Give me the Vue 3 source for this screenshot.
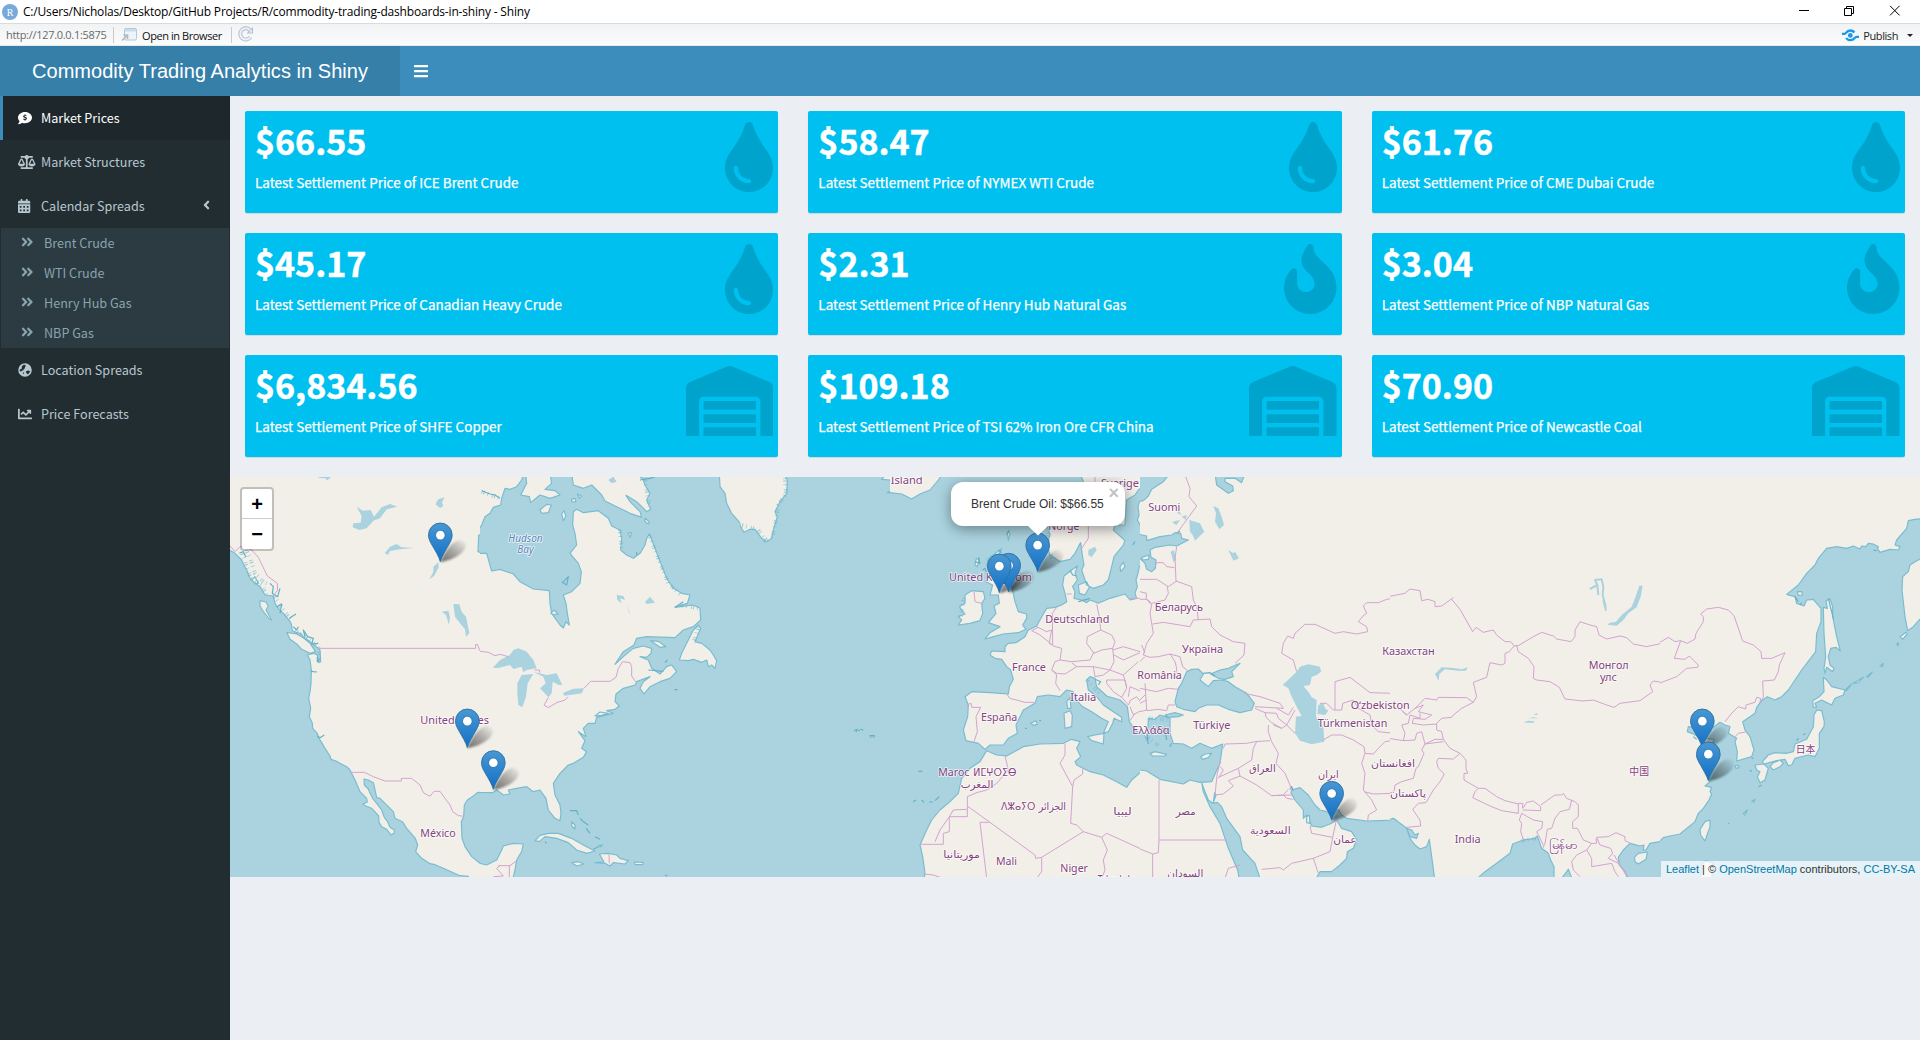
<script setup>
const icons = {
  tint: { w: 352, d: 'M205.22 22.09c-7.94-28.78-49.44-30.12-58.44 0C100.01 179.85 0 222.72 0 333.91 0 432.35 78.72 512 176 512s176-79.65 176-178.09c0-111.75-99.79-153.34-146.78-311.82zM176 448c-61.75 0-112-50.25-112-112 0-8.84 7.16-16 16-16s16 7.16 16 16c0 44.11 35.89 80 80 80 8.84 0 16 7.16 16 16s-7.16 16-16 16z' },
  fire: { w: 384, d: 'M216 23.86c0-23.8-30.65-32.77-44.15-13.04C48 191.85 224 200 224 288c0 35.63-29.11 64.46-64.85 63.99-35.17-.45-63.15-29.77-63.15-64.94v-85.51c0-21.7-26.47-32.23-41.43-16.5C27.8 213.16 0 261.33 0 320c0 105.87 86.13 192 192 192s192-86.13 192-192c0-170.29-168-193-168-296.14z' },
  warehouse: { w: 640, d: 'M504 352H136.4c-4.4 0-8 3.6-8 8l-.1 48c0 4.4 3.6 8 8 8H504c4.4 0 8-3.6 8-8v-48c0-4.4-3.6-8-8-8zm0 96H136.1c-4.4 0-8 3.6-8 8l-.1 48c0 4.4 3.6 8 8 8h368c4.4 0 8-3.6 8-8v-48c0-4.4-3.6-8-8-8zm0-192H136.6c-4.4 0-8 3.6-8 8l-.1 48c0 4.4 3.6 8 8 8H504c4.4 0 8-3.6 8-8v-48c0-4.4-3.6-8-8-8zm106.5-139L338.4 3.7a48.15 48.15 0 0 0-36.9 0L29.5 117C11.7 124.5 0 141.9 0 161.3V504c0 4.4 3.6 8 8 8h80c4.4 0 8-3.6 8-8V256c0-17.6 14.6-32 32.6-32h382.8c18 0 32.6 14.4 32.6 32v248c0 4.4 3.6 8 8 8h80c4.4 0 8-3.6 8-8V161.3c0-19.4-11.7-36.8-29.5-44.3z' },
  comment: { w: 512, d: 'M256 32C114.600 32 0 125.100 0 240c0 49.600 21.400 95 57 130.700C44.500 421.100 2.700 466 2.200 466.500c-2.200 2.300-2.800 5.700-1.500 8.700S4.800 480 8 480c66.300 0 116-31.800 140.600-51.400 32.700 12.300 69 19.400 107.400 19.400 141.400 0 256-93.100 256-208S397.400 32 256 32zM240 120h32v26c18 2 34 9 46 19l-22 28c-14-11-32-17-48-15-18 2-20 20-6 27l44 16c62 24 52 96-14 106v25h-32v-25c-22-2-40-10-54-22l22-30c18 15 42 22 60 17 18-5 18-22 2-29l-44-17c-58-24-48-90 14-101z' },
  scale: { w: 640, d: 'M256 336h-.02c0-16.180 1.340-8.730-85.050-181.510-17.650-35.290-68.190-35.360-85.870 0C-2.060 328.750.02 320.330.02 336H0c0 44.180 57.310 80 128 80s128-35.820 128-80zM128 176l72 144H56l72-144zm511.980 160c0-16.180 1.340-8.730-85.050-181.510-17.650-35.290-68.190-35.360-85.870 0-87.120 174.260-85.040 165.840-85.040 181.510H384c0 44.180 57.310 80 128 80s128-35.820 128-80h-.02zM440 320l72-144 72 144H440zm88 128H352V153.250c23.510-10.290 41.160-31.480 46.390-57.250H528c8.840 0 16-7.160 16-16V48c0-8.840-7.160-16-16-16H383.640C369.040 12.680 346.090 0 320 0s-49.040 12.680-63.640 32H112c-8.840 0-16 7.160-16 16v32c0 8.840 7.160 16 16 16h129.610c5.230 25.760 22.870 46.960 46.390 57.250V448H112c-8.840 0-16 7.160-16 16v32c0 8.840 7.160 16 16 16h416c8.840 0 16-7.160 16-16v-32c0-8.840-7.160-16-16-16z' },
  calendar: { w: 448, d: 'M0 464c0 26.500 21.500 48 48 48h352c26.500 0 48-21.500 48-48V192H0zM320 256h64v64h-64zM320 384h64v64h-64zM192 256h64v64h-64zM192 384h64v64h-64zM64 256h64v64H64zM64 384h64v64H64zM400 64h-48V16c0-8.800-7.200-16-16-16h-32c-8.800 0-16 7.200-16 16v48H160V16c0-8.800-7.200-16-16-16h-32c-8.800 0-16 7.200-16 16v48H48C21.500 64 0 85.500 0 112v48h448v-48c0-26.500-21.500-48-48-48z' },
  globe: { w: 512, d: 'M256 8a248 248 0 1 0 0 496a248 248 0 1 0 0-496zM150 108L210 62l60 14 14 44-34 26 8 46-46 26-12 48-62 20-24 26-44-10-16-50 40-28 36-10zM300 300l62-28 78 16-12 52-50 62-40 10-20-50-34-14zM180 340l44 14-6 40-28 6z' },
  chart: { w: 512, d: 'M496 384H64V80c0-8.840-7.160-16-16-16H16C7.160 64 0 71.160 0 80v336c0 17.670 14.330 32 32 32h464c8.840 0 16-7.160 16-16v-32c0-8.840-7.160-16-16-16zM464 96H345.940c-21.380 0-32.090 25.850-16.970 40.970l32.400 32.400L288 242.750l-73.370-73.370c-12.500-12.500-32.760-12.500-45.250 0l-68.690 68.690c-6.250 6.250-6.250 16.380 0 22.630l22.620 22.620c6.250 6.250 16.380 6.250 22.630 0L192 237.250l73.370 73.370c12.500 12.500 32.760 12.500 45.250 0l96-96 32.400 32.400c15.120 15.120 40.970 4.410 40.970-16.970V112c.01-8.840-7.150-16-15.990-16z' },
  angles: { w: 448, d: 'M224.300 273l-136 136c-9.400 9.400-24.600 9.400-33.900 0l-22.600-22.600c-9.400-9.400-9.400-24.600 0-33.900l96.400-96.400-96.400-96.400c-9.400-9.400-9.400-24.600 0-33.900L54.300 103c9.400-9.400 24.600-9.400 33.900 0l136 136c9.500 9.400 9.500 24.600.1 34zm192-34l-136-136c-9.400-9.400-24.600-9.400-33.900 0l-22.600 22.600c-9.400 9.400-9.400 24.600 0 33.900l96.400 96.400-96.400 96.400c-9.400 9.400-9.400 24.600 0 33.900l22.600 22.600c9.400 9.400 24.600 9.400 33.900 0l136-136c9.400-9.200 9.400-24.400 0-33.800z' },
}

const menu = [
  { label: 'Market Prices', icon: 'comment', active: true },
  { label: 'Market Structures', icon: 'scale' },
  { label: 'Calendar Spreads', icon: 'calendar', children: ['Brent Crude', 'WTI Crude', 'Henry Hub Gas', 'NBP Gas'] },
  { label: 'Location Spreads', icon: 'globe' },
  { label: 'Price Forecasts', icon: 'chart' },
]

const boxes = [
  { value: '$66.55', name: 'ICE Brent Crude', icon: 'tint' },
  { value: '$58.47', name: 'NYMEX WTI Crude', icon: 'tint' },
  { value: '$61.76', name: 'CME Dubai Crude', icon: 'tint' },
  { value: '$45.17', name: 'Canadian Heavy Crude', icon: 'tint' },
  { value: '$2.31', name: 'Henry Hub Natural Gas', icon: 'fire' },
  { value: '$3.04', name: 'NBP Natural Gas', icon: 'fire' },
  { value: '$6,834.56', name: 'SHFE Copper', icon: 'warehouse' },
  { value: '$109.18', name: 'TSI 62% Iron Ore CFR China', icon: 'warehouse' },
  { value: '$70.90', name: 'Newcastle Coal', icon: 'warehouse' },
]

// Map strips, west to east. Map units are a third of a pixel.
const tiles = [
  {
    at: 0, from: 0, w: 750, base: 'sea',
    land: 'M-10 0H765V192L746 195 744 245 765 252V966L742 968 730 978 712 990 703 1005 701 1040 694 1055 696 1105 705 1130 725 1160 750 1180 765 1188V1240H725L715 1219 690 1217 640 1195 615 1184 600 1181 575 1165 557 1145 563 1125 556 1105 530 1075 517 1055 495 1045 490 1025 465 1000 450 985 440 983 434 955 430 938 415 930 402 927 403 945 415 957 418 965 428 985 440 1000 455 1020 463 1042 473 1055 480 1072 493 1080 493 1089 483 1095 470 1078 455 1070 447 1057 446 1038 425 1015 408 1008 398 1003 412 996 410 985 390 965 375 930 360 900 350 890 330 880 318 873 303 868 300 858 285 835 275 818 265 802 262 790 248 775 247 760 238 740 242 715 236 685 240 665 243 640 244 600 240 570 232 555 250 550 262 555 266 578 272 575 270 540 262 533 240 515 220 500 212 490 200 488 187 482 184 462 178 452 160 430 145 415 135 400 130 378 105 375 90 350 70 335 60 325 50 300 40 282 35 270 15 250-10 235ZM170 487L200 492 222 505 240 520 257 545 240 550 215 538 200 522 180 508ZM90 392L108 396 115 408 108 420 125 450 118 447 100 425 90 408ZM65 330L75 320 85 340 76 342Z',
    lakes: 'M260 20H305L292 31 285 25 270 24ZM380 110L398 122 422 120 432 140 455 112 480 102 502 110 470 118 450 145 430 152 410 175 388 180 368 172 370 160 392 158 395 138ZM464 250L480 230 500 222 515 232 552 234 510 238 480 243 474 255ZM618 98L625 88 643 82 636 98 640 108 630 114 618 104ZM625 277L626 292 612 318 598 328 610 305 610 290ZM670 402L688 403 695 425 708 440 718 490 708 500 705 478 690 460 675 440ZM635 425L655 422 660 440 657 465 648 435Z',
    fjord: 'M35 245L50 290 62 325 95 345 110 375 M48 240L62 270 75 310 100 335 120 345 M130 375L160 420 185 455 M195 482L230 505 265 530 268 570',
    fine: 'M120 340L130 350 127 370 143 380 150 355 M140 412L155 402 150 430 M178 445L198 432 M190 470L200 480 205 470 M225 500L220 480 233 500 250 505 245 522 265 520 M262 560V575L270 568 M242 603L250 605 261 606 M262 798L270 803 283 795 M28 250L40 245 48 262',
    borders: 'M-5 222L15 245 30 230 45 232 65 240 85 262 112 318 142 340 143 360 132 375 M262 535H737V523L743 524 749 542 M362 907H403L430 920 465 933H514V925H545L570 945 580 968 600 979 612 964H630L645 985 660 1005 668 1025 685 1037 703 1039',
  },
  {
    at: 750, from: 0, w: 780, base: 'sea',
    land: 'M-15 0H135L125 30 110 50 90 58 75 55 65 85 62 105 40 112 30 130 15 140 5 165-15 200ZM-15 250H20L35 303 60 298 100 312 120 335 160 357 208 362 210 400 215 430 240 465 250 474 258 455 268 465 262 430 258 400 250 375 275 365 300 340 304 305 295 280 270 250 290 225 285 190 278 165 280 125 290 118 310 128 355 122 385 145 395 168 420 180 425 205 422 240 440 255 460 265 480 250 495 225 500 205 508 192 525 235 540 275 560 325 580 355 605 370 630 375 622 400 585 412 640 405 660 415 662 450 640 470 610 480 585 503 500 500 470 505 462 525 430 545 405 583 430 560 460 535 490 528 515 535 513 550 500 562 480 560 505 570 515 595 540 612 560 590 575 585 590 605 570 625 540 635 510 650 492 672 480 655 490 635 510 620 470 635 465 645 430 655 408 672 405 695 418 708 405 718 380 722 400 730 350 742 345 760 325 760 310 775 318 800 295 785 315 812 305 835 320 845 310 862 280 880 265 885 240 910 220 940 225 975 240 1005 243 1030 240 1052 225 1045 205 1020 198 985 180 960 160 965 140 950 110 955 85 960 90 972 70 975 50 960 38 968 0 967-15 966ZM-15 1175L0 1180 20 1185 50 1170 65 1140 70 1128 100 1120 130 1122 125 1145 110 1170 105 1200 95 1240H-15ZM275 10L280 45 310 55 335 45 365 75 375 93 410 110 450 130 485 142 480 125 470 115 450 95 438 76 470 95 500 125 512 118 500 90 510 70 495 45 490 30 470 10ZM137 10L140 40 122 75 148 80 152 98 180 75 210 85 240 75 225 62 195 58 215 40 210 10ZM180 120L200 103 214 105 205 128 185 130ZM245 132L252 122 258 138 250 152ZM274 88L285 85 288 95 276 96ZM292 72L305 78 298 85ZM598 570L605 550 620 520 640 480 655 465 662 475 645 515 665 520 690 540 700 555 710 572 705 595 695 585 685 590 680 570 665 577 640 568 625 572ZM512 512L535 514 558 530 540 532ZM212 430L222 420 235 432 220 434ZM345 738L360 726 385 730 365 736ZM165 1112L180 1096 205 1090 235 1090 275 1105 310 1125 345 1143 320 1150 290 1140 265 1118 230 1105 195 1100 178 1115ZM345 1178L372 1176 358 1152 385 1150 410 1155 420 1165 445 1172 435 1182 400 1178 390 1188 375 1180ZM275 1178L295 1175 312 1182 290 1188ZM463 1176L490 1177 488 1184 465 1184ZM718 10L720 50 735 70 740 100 755 130 790 170V10ZM275 1055L285 1065 285 1077 275 1068ZM495 145L508 155 505 162 495 155ZM444 190L455 188 450 202ZM355 1127L368 1125 360 1131Z',
    lakes: 'M38 593L60 570 90 555 100 540 115 535 140 545 160 570 170 595 140 600 130 607 125 590 100 597 90 585 55 594ZM112 640L125 615 160 612 143 640 138 680 127 712 115 705 112 670ZM160 605L200 615 230 610 247 645 236 645 218 635 215 670 205 682 190 665 180 655 197 640 190 620ZM250 668L280 656 312 655 305 670 275 674 252 677ZM385 30L400 20 410 35 395 40ZM410 375L430 378 435 390 420 385 425 400 412 390ZM495 395L510 380 525 398 500 402ZM440 405L452 435 446 425Z',
    fjord: 'M420 180L425 240 M508 195L525 240 545 290 565 340 600 372 M495 25L508 110 M655 470L640 520 M600 405L655 415 M5 65L60 85',
    fine: 'M270 1022L290 1022 295 1035 M300 1045L310 1055 325 1065 M318 1075L330 1090 M345 1100L360 1108 M355 1130L340 1138 M5 62L30 72 45 75 60 85 M585 412L610 395 M480 30L510 25 525 20 M555 578L562 570 M505 600L550 604 M583 659H592 M250 335L265 320 260 345 245 335 M470 245V255 M555 1215L562 1218 M195 1115L200 1120',
    borders: 'M-5 543L25 547 45 557 60 553 85 560 M163 600L178 600 180 608 M205 683L192 705 205 713 230 698 255 690 264 680 M312 655L332 634H390L408 622 415 595 428 575 450 578 455 590V618L467 635 M55 1187H90L110 1172 M88 1187V1225 M50 1195L70 1218 40 1220 M50 1195L60 1187 M387 1153L388 1180',
  },
  {
    at: 1530, from: 30, w: 450, base: 'sea',
    land: 'M-5 10H162L172 30 170 70 150 95 135 125 142 140 130 180 125 205 110 215 95 205 75 178 60 178 42 187 20 150 5 120-5 100ZM455 28L480 30 485 60 472 68 500 70 520 75V10H470ZM420 797H433V801H420Z',
    lakes: '',
    fjord: 'M165 25L168 70 145 105 138 150 128 200 105 210 85 180 M30 165L80 178',
    fine: 'M0 35L10 45 M372 782L382 778 378 786 M392 778L400 780 M420 797H434 M385 783L390 780',
    borders: '',
  },
  {
    at: 1980, from: 0, w: 750, base: 'sea',
    land: 'M-15 10H160L145 30 120 60 90 72 65 87 35 72 0 68-15 66ZM570 10L590 60 470 160 480 195 470 225 480 255 495 265 510 275 540 268 555 250 565 230 572 218 577 255 582 285 575 300 590 345 610 355 640 345 655 330 665 290 672 260 700 225 705 212 690 198 670 180 675 165 705 165 710 90 735 75 745 60 765 45V10ZM765 95H748L744 110 747 135 742 150 750 165 765 190ZM765 272L748 290 744 310 738 330 742 350 735 370 740 385 720 390 705 372 660 385 625 400 600 390 590 398 575 390 552 385 555 365 548 350 562 330 555 310 562 288 545 300 522 318 518 345 525 370 530 395 515 405 495 412 470 415 460 432 440 468 415 480 405 500 378 518 355 520 345 530 345 545 305 543 300 555 315 565 335 568 350 590 362 600 370 628 358 650 355 672 300 668 245 665 225 680 235 705 233 740 220 780 228 812 265 820 285 838 300 825 340 825 355 805 382 790 378 765 400 720 435 700 442 680 475 675 510 680 530 660 550 665 560 690 575 708 605 725 635 745 655 755 640 790 655 785 668 760 672 745 695 755 695 742 670 725 640 705 620 680 595 660 590 630 600 620 615 625 620 650 650 678 690 690 712 710 718 755 735 780 765 800ZM300 262L335 236 322 262 350 270 345 330 365 350 375 395 385 425 410 432 410 445 398 465 408 478 385 488 340 492 310 500 285 507 300 488 330 470 295 458 318 430 312 408 328 400 325 375 300 375 308 345 288 335 305 305 290 285ZM225 375L245 362 280 365 285 385 275 400 278 430 270 452 240 460 205 465 215 450 205 440 225 432 208 410 225 400ZM530 695L540 683 543 715 533 715ZM522 730L540 722 547 735 545 770 525 775ZM593 800L615 795 642 790 640 822 605 812ZM422 760L438 752 442 763 430 766ZM690 290L700 277 705 290 692 305ZM565 345L590 335 598 352 585 375 568 370ZM290 842L320 855 350 858 400 830 450 822 520 820 545 808 570 815 560 835 572 860 555 875 560 885 600 905 640 915 680 935 710 952 725 930 765 895V1240H100L105 1210 98 1160 90 1125 110 1080 125 1050 150 1020 180 995 205 970 215 925 240 895 270 875ZM352 185L360 190 355 212ZM258 268L268 265 262 290 255 285Z',
    lakes: 'M595 240L615 230 620 240 605 262 595 255Z',
    fjord: 'M475 190L472 235 485 262 510 277 M295 265L300 305 292 335 M222 385L210 450 M590 628L630 672',
    fine: 'M265 262L270 280 255 275 M278 300L285 295 290 310 M350 195L358 180 M325 240L335 248 M615 628L632 635 625 645 M85 904H97 M95 990L102 997 M118 996H128 M135 992L148 980 M70 995L78 990 M405 775H410 M448 752H453 M565 395L600 385 M540 300L548 315 560 318 M735 215L728 225',
    borders: 'M350 672L360 685 405 697H433 M230 705L243 700 245 712H272L258 740 262 785 252 815 M510 662L497 640 500 615 485 600 495 575 510 570 515 535 490 528 475 515 450 495 425 482 M440 470L470 485 485 480 480 505 478 520 488 525 487 430 500 412 M445 472L425 482 M620 403L628 440 632 480 665 495 675 515 668 535 635 540 612 550 590 520 592 500 632 480 M510 570L545 575 600 570 612 545 M485 600L500 610 525 612 560 590 545 578 M560 590L610 590 660 600 672 575 668 535 M668 540L700 530 750 545 M672 555L700 570 750 548 M610 590L615 620 640 615 660 600 700 615 745 575 M650 630L705 630 710 655 695 682 670 665 650 640ZM700 615L710 650 M695 682L715 705 722 690 M715 680L720 650 755 665 M722 690L740 680 755 700 M720 710L730 735 755 720 M720 752L735 730 M252 365L255 395 275 400 M572 240L595 205V160 M615 20V40 M720 385H755 M545 372L530 372 M345 858L355 900 320 940 290 960 260 968 232 980V1040H178V1085L160 1090V1123H90 M178 1040L150 1080 135 1115 M178 1040L190 1020 230 1018 M232 1008L435 1155 437 1165 455 1162 580 1085 560 1065 542 1060 548 950 510 880 525 855V820 M548 950L552 930 578 912V895 M298 1057H270L290 1225 M455 1162V1205L440 1225 M580 1085L635 1102 650 1090 760 1140 M635 1102L652 1140 640 1170 645 1200 635 1225 M100 1212L130 1215 150 1222',
  },
  {
    at: 2730, from: 0, w: 750, base: 'land',
    sea: 'M-15 10H90L70 35 35 58 25 78 10 92-15 95ZM225 10L230 45 265 70 280 62 278 48 255 35 255 25 285 25 305 38 315 10ZM-15 190L20 198 20 212 60 200 95 195 105 188 122 190 125 205 145 210 110 228 90 225 45 232 30 240 33 262 48 270 46 295 35 305 20 298 15 280 0 265-15 270ZM105 695L115 655 125 640 140 605 155 598 175 597 190 612 180 630 205 650 220 632 245 630 265 635 285 650 320 670 343 700 335 720 300 728 265 718 235 705 200 705 175 715 165 725 130 718 110 710ZM212 612L240 600 265 595 300 580 275 605 280 620 255 628 235 625ZM-15 765L5 780 22 812 25 745 45 748 60 735 75 740 90 745 90 790 100 820 130 822 155 835 180 820 215 835 248 822 240 880 228 905 215 935 180 937 150 930 130 942 60 928 20 903 0 900-15 893ZM75 735L105 728 130 735 115 740 85 742ZM185 938L193 960 205 990 218 1000 232 997 245 1010 260 1045 300 1100 308 1140 345 1180 365 1240H300L293 1200 265 1135 240 1060 210 1010 190 965ZM453 968L455 960 480 953 505 975 525 1005 540 1020 560 1025 578 1035 595 1018 605 1035 620 1045 680 1053 720 1052 765 1050V1240H520L540 1205 575 1205 600 1185 620 1165 622 1145 640 1135 650 1110 635 1085 605 1075 590 1050 575 1060 545 1072 515 1068 500 1035 490 1045 490 1020 465 990ZM220 998L228 975 224 968Z',
    isles: 'M30 850L45 845 80 853 75 858 38 858ZM182 860L195 852 215 850 205 863 188 868ZM5 262L28 255 25 268 8 270ZM500 1040L508 1035 510 1060 500 1058Z',
    lakes: 'M428 645L470 605 480 590 505 583 540 590 543 605 530 615 515 620 510 645 490 648 505 665 515 682 530 690 528 740 550 770 553 815 515 823 480 812 465 790 468 740 485 738 470 710 455 680 445 655ZM535 705L550 700 555 715 565 722 555 735 532 732ZM148 150L180 160 193 185 165 212 158 195 150 185ZM220 108L235 115 245 140 252 165 238 178 225 155 228 130ZM92 245L102 240 108 270 100 275ZM265 240L280 250 285 245 297 265 280 272ZM115 120L125 135 112 130ZM98 155L120 150 110 165 100 160ZM125 140L140 135 138 150Z',
    land: '',
    fjord: 'M28 745L90 750 M20 800L60 830',
    fine: 'M190 610L210 608 225 618 M20 790L25 822 M45 780L75 775 80 810 M95 820L90 830 M110 190L120 183 M450 958L455 950 460 962',
    borders: 'M135 15L150 55 147 80 170 108 112 188 M110 230L105 265 108 333 M45 290L50 278 70 278 80 290 103 293 M0 328H50L85 350 110 333 M0 365L20 370 18 385 35 400 75 390 85 370 82 350 M0 388H20L35 405 30 430 40 490 20 520 10 555 30 562 55 560 M108 333L155 350 160 390 170 410 175 450 M38 462L70 457 150 470 160 450 210 447 215 470 240 495 280 515 315 520 312 555 285 580 M5 525L15 550 M55 560L90 552 120 560 128 590 143 602 M90 552L105 575 110 595 105 625 M0 575L15 560 M0 655L25 660 50 665 85 655 115 658 M15 640L20 720 0 725 M20 722L55 718 80 722 85 705H105 M0 700L20 690 M0 690L15 675 M313 670L360 680 420 700 430 715 345 710 M345 715L375 728 378 742 395 758 425 775 400 765 M375 728L410 730 415 745 440 765 465 720 M410 715L445 735 460 712 M425 775L440 765 465 790 M385 765L385 785 395 815 415 850 408 880 435 910 450 945 455 965 M390 812L345 815 320 820 255 822 250 835 M455 975L395 977 350 945 300 918 295 895 240 920 M295 895L335 870 340 835 350 815 M242 870L232 910 228 945 225 975 250 972 280 948 265 932 300 918 M240 890L250 900 235 925 M395 977L430 975 440 985 460 988 M430 975L445 958 M57 930V1110H260 M57 1110L55 1148 38 1152V1225 M-5 1135L38 1152 M365 1198L420 1193 430 1200 455 1180 520 1165 570 1145 578 1102 515 1090 510 1068 M578 1102L585 1070 590 1045 M520 1165L535 1210 M300 1185L265 1195 255 1225 M550 810L575 795 605 795 640 810 672 830 675 850 665 880 675 910 670 960 695 990 710 1020 685 1035 683 1053 M672 965L700 972 760 970 M675 850L700 852 720 830 735 815 755 812 M540 700L560 700 580 720H605L608 700 640 690 655 715 690 735 695 765 715 785 760 790 M585 720V635L630 622 690 668 760 670 M470 605L460 570 425 550 430 520 443 498 460 505 465 490 495 463 525 463 585 490 610 485 650 492 683 485 680 470 655 455 672 435 680 430 670 408 680 398 715 398 740 388 760 385',
  },
  {
    at: 3480, from: 0, w: 810, base: 'land',
    sea: 'M-15 1052L10 1045 18 1050 30 1060 50 1075 60 1105 75 1125 90 1137 110 1130 118 1108 125 1160 133 1220V1240H-15ZM262 1225L285 1205 320 1180 360 1150 368 1122 400 1110 435 1105 442 1098 455 1135 475 1150 482 1170 492 1190V1240H255ZM515 1225L535 1198 548 1230ZM825 1112L780 1120 768 1140 760 1140 762 1125 750 1128 720 1120 700 1140 685 1162 688 1185 705 1205 718 1240H825ZM50 1075L65 1080 75 1095 85 1090 80 1105 60 1100Z',
    isles: 'M733 1162L745 1150 772 1146 768 1168 745 1182 735 1175Z',
    lakes: 'M748 347L758 347 752 380 740 412 715 430 700 450 680 467 652 464 660 458 678 455 695 435 725 410 735 385ZM135 612L155 592 190 594 215 598 233 592 228 602 205 602 165 598 148 612 146 632ZM400 757L415 752 435 754 428 759ZM415 745L430 742 446 745ZM430 735L440 729 444 734Z',
    land: '',
    fjord: 'M395 1112L440 1105',
    fine: '',
    river: 'M600 357L622 345 615 330 635 328 640 350 638 375 647 410 642 400 M622 345L625 375 M640 390L648 422',
    borders: 'M-5 380L45 370 60 357 90 362 95 392 115 388 135 395 135 410 155 408 190 383 M185 388L210 418 248 485 258 472 280 487 310 480 320 495 345 515 362 515 375 530 M372 528L358 545 345 550 345 580 335 585 300 578 290 622 250 637 260 680 250 697 230 683 145 682 140 690 105 685 90 700 75 715 50 735 38 725 M250 697L215 715 190 735 185 742 155 745 140 760 140 780 155 785 160 808 M50 735L35 720 10 710 M75 715L100 705 85 725 125 735 105 748 70 745 67 760 100 765 140 762 M90 730L90 745 60 735 55 760 35 765 45 790 40 812 M-5 805L40 812 75 810 80 790 95 785 105 822 135 808 160 808 M105 822L160 815 M160 808L180 835 210 850 228 870V895L233 910 222 910V930L265 955 M210 850L190 867 145 865 140 875 145 895 163 912 150 935 130 960 108 998 85 1000 68 1018 90 1050 92 1068 50 1072 M105 822L95 840 102 850 85 890 78 895 70 925 35 935 15 945 12 965-5 970 M265 955L285 955 320 980 345 992 385 1002V1030L335 1022 300 1008 248 983 255 965 265 955 M385 1000L398 1000V1015L410 997 430 993 452 1010V1022L398 1020 M452 1005L495 975 515 975 520 970 530 985 555 995 565 1005V1040L548 1055V1075H562L580 1110 605 1120 M545 990L538 1018 510 1025 495 1045 485 1075 472 1078 465 1120 458 1135 M395 1030L412 1040 430 1050 458 1055 455 1075 440 1085 460 1125 M395 1030L388 1050 395 1060 392 1085 402 1115 M375 527H385L430 500 455 487 490 498 500 507 543 515 555 500V480L570 455 600 465 620 470 627 495 650 507 690 498 710 503 730 522 770 530 815 520 M380 527L385 545 415 565 432 590 430 625 440 630 480 635 508 652 525 687 580 693 610 690 650 705 672 712 690 700 750 692 788 665 780 645 790 633 815 637 M605 1120L590 1140 560 1155 545 1175 550 1200 570 1220 M620 1102L655 1100 678 1088 705 1100 705 1112 722 1120 M620 1102L630 1125 662 1135 668 1150 655 1165 685 1180 715 1220 M590 1140L605 1165 605 1190 665 1180 675 1205 685 1220 M605 1120L620 1120 618 1105 M672 1155L710 1218',
  },
  {
    at: 4290, from: 0, w: 780, base: 'sea',
    land: 'M-15 0H795V145L765 148 745 152 740 175 710 210 705 225 720 230 715 240 690 238 660 247 652 235 655 230 640 222 625 220 618 230 605 228 600 237 580 228 560 235 530 230 500 235 475 265 465 285 440 310 415 345 380 373 405 380 410 400 432 408 440 390 460 388 470 400 483 415V455L470 490 467 545 425 600 385 660 365 680 345 690 322 680 305 692 290 712 285 730 248 755 255 780 270 800 282 840 275 860 230 873 232 845 225 815 230 805 205 790 210 770 195 765 180 757 160 772 140 775 120 785 100 772 85 770 82 785 95 790 115 800 130 805 162 808 160 815 135 835 110 860 130 900 150 935 135 948 155 952 150 965 155 972 147 990 130 1015 115 1030 105 1055 60 1092 30 1098 10 1103 0 1112-15 1115ZM490 412L502 415 498 392 510 387 518 410V440L530 500 541 543 528 532 512 535 505 560 510 585 522 595 518 605 500 592 495 610 492 595 497 560 492 490ZM795 260L765 275 750 285 745 305 728 320 726 360 735 440 743 482 760 470 795 430ZM490 622L500 630 515 650 555 660 550 675 525 685 515 705 485 690 465 700 470 712 460 712 458 692 478 680 492 665ZM462 735L470 720 485 722 493 755 492 770 478 790 478 835 465 860 445 855 405 865 395 885 385 887 375 868 350 872 312 882 307 875 325 855 345 848 378 850 400 845 405 822 440 808 460 770ZM330 890L340 878 360 870 370 880 360 890 340 900ZM285 885L312 882 325 895 315 930 300 938 292 920 300 905 290 900ZM120 1078L135 1055 150 1050V1070L135 1113 122 1095ZM127 1180L140 1172 158 1180 155 1240H120ZM225 888L235 886 237 893 228 895ZM412 365L425 365 428 375 415 376ZM720 500L738 487 742 492 728 508ZM660 588L670 580 668 590ZM620 620L637 606 625 622ZM580 640L610 622 595 638ZM555 660L575 642 560 662ZM710 522L716 518 714 528ZM250 1030L262 1020 255 1035ZM275 995L285 988 282 996Z',
    lakes: '',
    fjord: '',
    fine: 'M430 795L436 790 M415 805L410 812 M275 865H280 M205 1060H208 M296 950L305 945 M100 800L110 808 M270 900L275 905 M505 385L520 445 M640 240L650 243 M405 380L415 395 M420 405L425 398',
    borders: 'M-5 520L25 502 45 515 62 512 82 520 105 507 108 490 130 455V440L122 432 140 417 175 412 205 420 222 437 248 513 280 525 303 545 305 565 335 565 375 548 358 585 355 605 343 630 308 633 310 682 300 697 302 685 290 682 285 697 258 705 257 717 235 710 215 730 195 755 M62 512L43 565 75 568 88 558 115 585 113 592 80 595 50 620 10 635-5 642 M225 800L235 790 262 785',
  },
]

const labels = [
  [1982, 42, 96, 'Island'], [2613, 50, 114, 'Sverige'], [2455, 181, 93, 'Norge'], [2755, 124, 96, 'Suomi'],
  [2157, 332, 249, 'United Kingdom'], [2446, 458, 192, 'Deutschland'], [2346, 602, 102, 'France'],
  [2253, 753, 109, 'España'], [2521, 694, 78, 'Italia'], [2125, 918, 93, 'Maroc'], [2230, 918, 129, 'ⵍⵎⵖⵔⵉⴱ'],
  [2192, 955, 98, 'المغرب'], [2313, 1020, 103, 'ⴷⵣⴰⵢⵔ'], [2426, 1020, 82, 'الجزائر'], [2650, 1035, 55, 'ليبيا'],
  [2140, 1165, 110, 'موريتانيا'], [2298, 1186, 63, 'Mali'], [2491, 1205, 83, 'Niger'], [2603, 1238, 128, 'Tchad تشاد'],
  [2774, 424, 145, 'Беларусь'], [2856, 550, 123, 'Україна'], [2722, 627, 133, 'România'], [2707, 793, 112, 'Ελλάδα'],
  [2890, 778, 111, 'Türkiye'], [3362, 718, 177, 'Oʻzbekiston'], [3263, 770, 209, 'Türkmenistan'], [3457, 555, 157, 'Казахстан'],
  [3057, 905, 80, 'العراق'], [3264, 925, 62, 'ایران'], [2837, 1036, 60, 'مصر'], [3060, 1091, 122, 'السعودية'],
  [3310, 1120, 70, 'عمان'], [2812, 1220, 108, 'السودان'], [3423, 892, 132, 'افغانستان'], [3480, 982, 108, 'پاکستان'],
  [3674, 1119, 78, 'India'], [3957, 1138, 84, 'မြန်မာ'], [4076, 597, 120, 'Монгол'], [4110, 633, 51, 'улс'],
  [4198, 915, 59, '中国'], [4697, 848, 59, '日本'], [571, 762, 206, 'United States'], [571, 1100, 106, 'México'],
]

// Tip of every pin, in map units.
const pins = [[631, 277], [2423, 307], [2336, 368], [2308, 370], [712, 835], [4417, 835], [4435, 934], [790, 960], [3305, 1052]]
</script>

<template>
  <div class="window">
    <div class="titlebar">
      <svg class="r-logo" width="16" height="16" viewBox="0 0 16 16"><circle cx="8" cy="8" r="8" fill="#75aadb" /><text x="8" y="11.500" text-anchor="middle" class="r-letter">R</text></svg>
      <span class="path">C:/Users/Nicholas/Desktop/GitHub Projects/R/commodity-trading-dashboards-in-shiny - Shiny</span>
      <div class="controls">
        <svg width="102" height="12" viewBox="0 0 102 12" fill="none" stroke="#000">
          <path d="M0 5.500h10M45.500 3.500h7v7h-7zM47.500 3V1.500h7v7H53" /><path d="M91 .8l9.600 9.600M100.600.8L91 10.400" />
        </svg>
      </div>
    </div>

    <div class="toolbar">
      <span class="url">http://127.0.0.1:5875</span>
      <i class="sep"></i>
      <svg class="open-icon" width="16" height="14" viewBox="0 0 16 14"><rect x="3.500" y=".5" width="12" height="11.500" rx="1.500" fill="#eef5fa" stroke="#b4c8d8" /><path d="M4 1h11v2.500H4z" fill="#c2ddf0" /><path d="M1 12.500l4.500-4.500M2.500 7h4v4" fill="none" stroke="#b3b9c0" stroke-width="1.600" /></svg>
      <span class="open">Open in Browser</span>
      <i class="sep"></i>
      <svg class="reload" width="16" height="16" viewBox="0 0 16 16" fill="none"><path d="M12.500 11A5.600 5.600 0 1 1 12.300 4.500" stroke="#b4bdcf" stroke-width="4" /><path d="M15 1v6.500H8.500z" fill="#b4bdcf" /><path d="M12.500 11A5.600 5.600 0 1 1 12.300 4.500" stroke="#edf1f8" stroke-width="2" /><path d="M14 3.500v3h-3z" fill="#edf1f8" /></svg>
      <div class="publish">
        <svg width="17" height="13" viewBox="0 0 17 13" fill="none" stroke="#1a9ae6" stroke-width="2.300"><circle cx="8.300" cy="6.400" r="2.400" fill="#1a9ae6" stroke="none" /><path d="M0 4.800h2.500C4.500 4.800 4 1.500 8.200 1.500c2 0 3.300.8 4.200 2M17 7.800h-2.500c-2 0-1.800 3.400-6 3.400-2 0-3.500-.8-4.400-2.200" /></svg>
        <span>Publish</span><i class="caret"></i>
      </div>
    </div>

    <header class="header">
      <div class="logo"><span>Commodity Trading Analytics in Shiny</span></div>
      <svg class="bars" width="14" height="14" viewBox="0 0 448 448" fill="#fff"><rect y="28" width="448" height="72" rx="16" /><rect y="188" width="448" height="72" rx="16" /><rect y="348" width="448" height="72" rx="16" /></svg>
    </header>

    <div class="body">
      <nav class="sidebar">
        <template v-for="m in menu" :key="m.label">
          <a class="item" :class="{ active: m.active }">
            <svg class="ico" height="14" :width="icons[m.icon].w / 512 * 14" :viewBox="`0 0 ${icons[m.icon].w} 512`"><path fill-rule="evenodd" :d="icons[m.icon].d" /></svg>
            <span>{{ m.label }}</span>
            <svg v-if="m.children" class="angle" width="7" height="14" viewBox="0 0 256 512"><path d="M31.700 239l136-136c9.400-9.400 24.600-9.400 33.900 0l22.600 22.600c9.400 9.400 9.400 24.600 0 33.900L127.900 256l96.400 96.400c9.400 9.400 9.400 24.600 0 33.900L201.700 409c-9.400 9.400-24.600 9.400-33.900 0l-136-136c-9.500-9.400-9.500-24.600-.1-34z" /></svg>
          </a>
          <div v-if="m.children" class="sub">
            <a v-for="c in m.children" :key="c" class="subitem">
              <svg width="12.500" height="14" viewBox="0 0 448 512"><path :d="icons.angles.d" /></svg>
              <span>{{ c }}</span>
            </a>
          </div>
        </template>
      </nav>

      <main class="content">
        <div class="grid">
          <div v-for="b in boxes" :key="b.name" class="box">
            <div>
              <h3>{{ b.value }}</h3>
              <p>Latest Settlement Price of {{ b.name }}</p>
            </div>
            <svg class="big" height="70" :width="icons[b.icon].w / 512 * 70" :viewBox="`0 0 ${icons[b.icon].w} 512`"><path :d="icons[b.icon].d" /></svg>
          </div>
        </div>

        <div class="map">
          <svg class="world" width="1690" height="400" viewBox="0 21 5070 1200">
            <defs>
              <linearGradient id="pin" x1="0" y1="0" x2="0" y2="1"><stop offset="0" stop-color="#4a98d3" /><stop offset="1" stop-color="#126fc6" /></linearGradient>
              <linearGradient id="shade" x1="0" y1="1" x2="1" y2="0"><stop offset="0" stop-color="#000" stop-opacity=".55" /><stop offset=".5" stop-color="#000" stop-opacity=".3" /><stop offset="1" stop-color="#000" stop-opacity="0" /></linearGradient>
              <filter id="soft" x="-30%" y="-30%" width="160%" height="160%"><feGaussianBlur stdDeviation="1.300" /></filter>
            </defs>
            <svg v-for="t in tiles" :key="t.at" :x="t.at" y="21" :width="t.w" height="1200" :viewBox="`${t.from} 21 ${t.w} 1200`">
              <rect x="-10" y="0" width="840" height="1240" :class="t.base + '-base'" />
              <path v-if="t.sea" class="sea" :d="t.sea" />
              <path v-if="t.land" class="land" :d="t.land" />
              <path v-if="t.isles" class="land" :d="t.isles" />
              <path v-if="t.lakes" class="lake" :d="t.lakes" />
              <path v-if="t.river" class="river" :d="t.river" />
              <path v-if="t.fjord" class="fjord" :d="t.fjord" />
              <path v-if="t.fine" class="fine" :d="t.fine" />
              <path v-if="t.borders" class="border" :d="t.borders" />
            </svg>
            <text v-for="l in labels" :key="l[3]" class="label" :x="l[0]" :y="l[1]" :textLength="l[2]" lengthAdjust="spacingAndGlyphs">{{ l[3] }}</text>
            <text class="label water" x="835" y="215" textLength="103" lengthAdjust="spacingAndGlyphs">Hudson</text>
            <text class="label water" x="862" y="250" textLength="49" lengthAdjust="spacingAndGlyphs">Bay</text>
            <g v-for="(p, i) in pins" :key="'s' + i" :transform="`translate(${p[0]} ${p[1]}) scale(3)`">
              <path d="M0 0C3-8 10-20 18-22 26-23 28-16 22-10 16-4 6-1 0 0Z" fill="url(#shade)" filter="url(#soft)" />
            </g>
            <g v-for="(p, i) in pins" :key="'p' + i" :transform="`translate(${p[0]} ${p[1]}) scale(3)`">
              <path d="M0-.8C-1.500-6-5-11.500-9-18.500-11-22-11.800-24.500-11.800-27.500A11.800 11.800 0 0 1 11.800-27.500C11.800-24.500 11-22 9-18.500 5-11.500 1.500-6 0-.8Z" fill="url(#pin)" stroke="#2d6f9f" stroke-width=".9" />
              <circle cx="0" cy="-27.200" r="5.300" fill="#3583bd" /><circle cx="0" cy="-27.200" r="4.300" fill="#fff" />
            </g>
          </svg>
          <div class="zoom"><b>+</b><b>−</b></div>
          <div class="popup">
            <span>Brent Crude Oil: $$66.55</span><i class="close">×</i>
            <svg class="tip" width="24" height="11" viewBox="0 0 24 11"><path d="M1 0h22L12 10.500z" fill="#fff" /></svg>
          </div>
          <div class="credit"><a>Leaflet</a> | © <a>OpenStreetMap</a> contributors, <a>CC-BY-SA</a></div>
        </div>
      </main>
    </div>
  </div>
</template>

<style>
body { margin: 0; background: #ecf0f5; }
</style>

<style scoped>
* { box-sizing: border-box; }
.window { width: 1920px; height: 1040px; overflow: hidden; background: #ebeff4; display: flex; flex-direction: column; font-family: "Noto Sans CJK SC", "Open Sans", sans-serif; }
.titlebar { height: 23px; flex: none; background: #fff; display: flex; align-items: center; padding-left: 2px; }
.r-letter { font: 10px "Liberation Serif", serif; fill: #fff; }
.path { margin-left: 5px; font: 12px/22px "Open Sans", sans-serif; color: #000; letter-spacing: -.185px; white-space: nowrap; }
.controls { margin-left: auto; padding-right: 19px; height: 14px; display: flex; }
.toolbar { height: 23px; flex: none; border-top: 1px solid #d9dbdd; border-bottom: 1px solid #e6e8e9; background: linear-gradient(#f0f2f4, #fbfcfc); display: flex; align-items: center; font: 11px/20px "Open Sans", sans-serif; padding: 2px 7px 0 6px; white-space: nowrap; }
.url { color: #696969; width: 107px; letter-spacing: -.3px; margin-top: -1px; }
.sep { width: 1px; height: 16px; background: #c9cbcd; margin-top: -2px; }
.open-icon { margin: -1px 0 0 7px; }
.open { margin: 1px 0 0 5px; width: 89px; letter-spacing: -.42px; color: #111; }
.reload { margin: -3px 0 0 6px; }
.publish { margin-left: auto; display: flex; align-items: center; color: #222; letter-spacing: -.42px; }
.publish span { margin-top: 1px; }
.publish svg { margin: -1px 4px 0 0; }
.caret { margin: 0 0 0 9px; border: 3px solid transparent; border-top-color: #222; border-bottom: 0; }
.header { height: 50px; flex: none; background: #3c8dbc; display: flex; align-items: center; }
.logo { width: 400px; height: 50px; background: #367fa9; color: #fff; display: flex; align-items: center; justify-content: center; font: 20px/50px "Liberation Sans", sans-serif; letter-spacing: .04px; white-space: nowrap; }
.bars { margin-left: 14px; }
.body { flex: 1; display: flex; min-height: 0; }
.sidebar { width: 230px; flex: none; background: #222d32; }
.item { height: 44px; display: flex; align-items: center; padding-left: 15px; border-left: 3px solid transparent; color: #b8c7ce; font-size: 12.600px; position: relative; }
.item.active { background: #1e282c; border-left-color: #3c8dbc; color: #fff; }
.item .ico { margin-right: 3px; margin-top: -1px; overflow: visible; }
.item span { position: absolute; left: 38px; line-height: 20px; white-space: nowrap; }
.angle { margin-left: auto; margin-right: 20px; margin-top: -3px; }
.item svg, .subitem svg { fill: currentColor; flex: none; }
.sub { margin: 0 1px; background: #2c3b41; }
.subitem { height: 30px; display: flex; align-items: center; padding-left: 20px; color: #8aa4af; font-size: 12.600px; line-height: 20px; }
.subitem span { margin-left: 10.500px; }
.subitem svg { margin-top: -2px; }
.content { flex: 1; min-width: 0; }
.grid { display: grid; grid-template-columns: repeat(3, 1fr); column-gap: 30px; row-gap: 20px; padding: 15px 15px 20px; }
.box { height: 102px; background: #00c0ef; border-radius: 2px; box-shadow: 0 1px 1px rgba(0, 0, 0, .1); color: #fff; padding: 10px 5px 0 10px; display: flex; justify-content: space-between; white-space: nowrap; }
.box h3 { margin: -1px 0 0; font-size: 34px; line-height: 42px; font-weight: 700; -webkit-text-stroke: .5px #fff; }
.box p { margin: 9px 0 0; font-size: 13.500px; line-height: 22px; -webkit-text-stroke: .25px #fff; }
.big { fill: rgba(0, 0, 0, .15); flex: none; margin-top: 1px; }
.map { position: relative; height: 400px; overflow: hidden; background: #aad3df; }
.world { display: block; }
.sea-base { fill: #aad3df; }
.land-base { fill: #f2efe9; }
.land { fill: #f2efe9; stroke: #79bccf; stroke-width: 3.500; stroke-linejoin: round; }
.sea { fill: #aad3df; stroke: #79bccf; stroke-width: 3.500; stroke-linejoin: round; }
.lake { fill: #aad3df; }
.river { fill: none; stroke: #aad3df; stroke-width: 6; stroke-linejoin: round; }
.fjord { fill: none; stroke: #6fb6ca; stroke-width: 12; stroke-dasharray: 2.500 4 3 9 2 13; opacity: .7; }
.fine { fill: none; stroke: #63b0c6; stroke-width: 3.500; stroke-linejoin: round; }
.border { fill: none; stroke: #d3a3d0; stroke-width: 3; stroke-linejoin: round; }
.label { font: 31px "Noto Sans", "DejaVu Sans", "Noto Sans CJK SC", sans-serif; fill: #84427e; stroke: rgba(255, 255, 255, .75); stroke-width: 5; paint-order: stroke; stroke-linejoin: round; }
.water { fill: #5b86bd; font-style: italic; }
.zoom { position: absolute; left: 10px; top: 10px; width: 34px; height: 64px; border: 2px solid rgba(0, 0, 0, .2); border-radius: 4px; background-clip: padding-box; background-color: #fff; display: flex; flex-direction: column; }
.zoom b { height: 30px; font: bold 20px/30px "Liberation Sans", sans-serif; text-align: center; color: #000; }
.zoom b:first-child { border-bottom: 1px solid #ccc; }
.popup { position: absolute; left: 721px; top: 5px; width: 174px; height: 44px; border-radius: 12px; background: #fff; box-shadow: 0 3px 14px rgba(0, 0, 0, .4); font: 12px/44px "Liberation Sans", sans-serif; color: #333; padding-left: 20px; white-space: nowrap; }
.close { position: absolute; right: 6px; top: 2px; font: bold 18px/18px "Liberation Sans", sans-serif; color: #c3c3c3; }
.tip { position: absolute; left: 75px; top: 43px; }
.credit { position: absolute; right: 0; bottom: 0; height: 16px; padding: 0 5px; background: rgba(255, 255, 255, .7); font: 11px/16px "Liberation Sans", sans-serif; color: #333; white-space: nowrap; }
.credit a { color: #0078a8; }
</style>
